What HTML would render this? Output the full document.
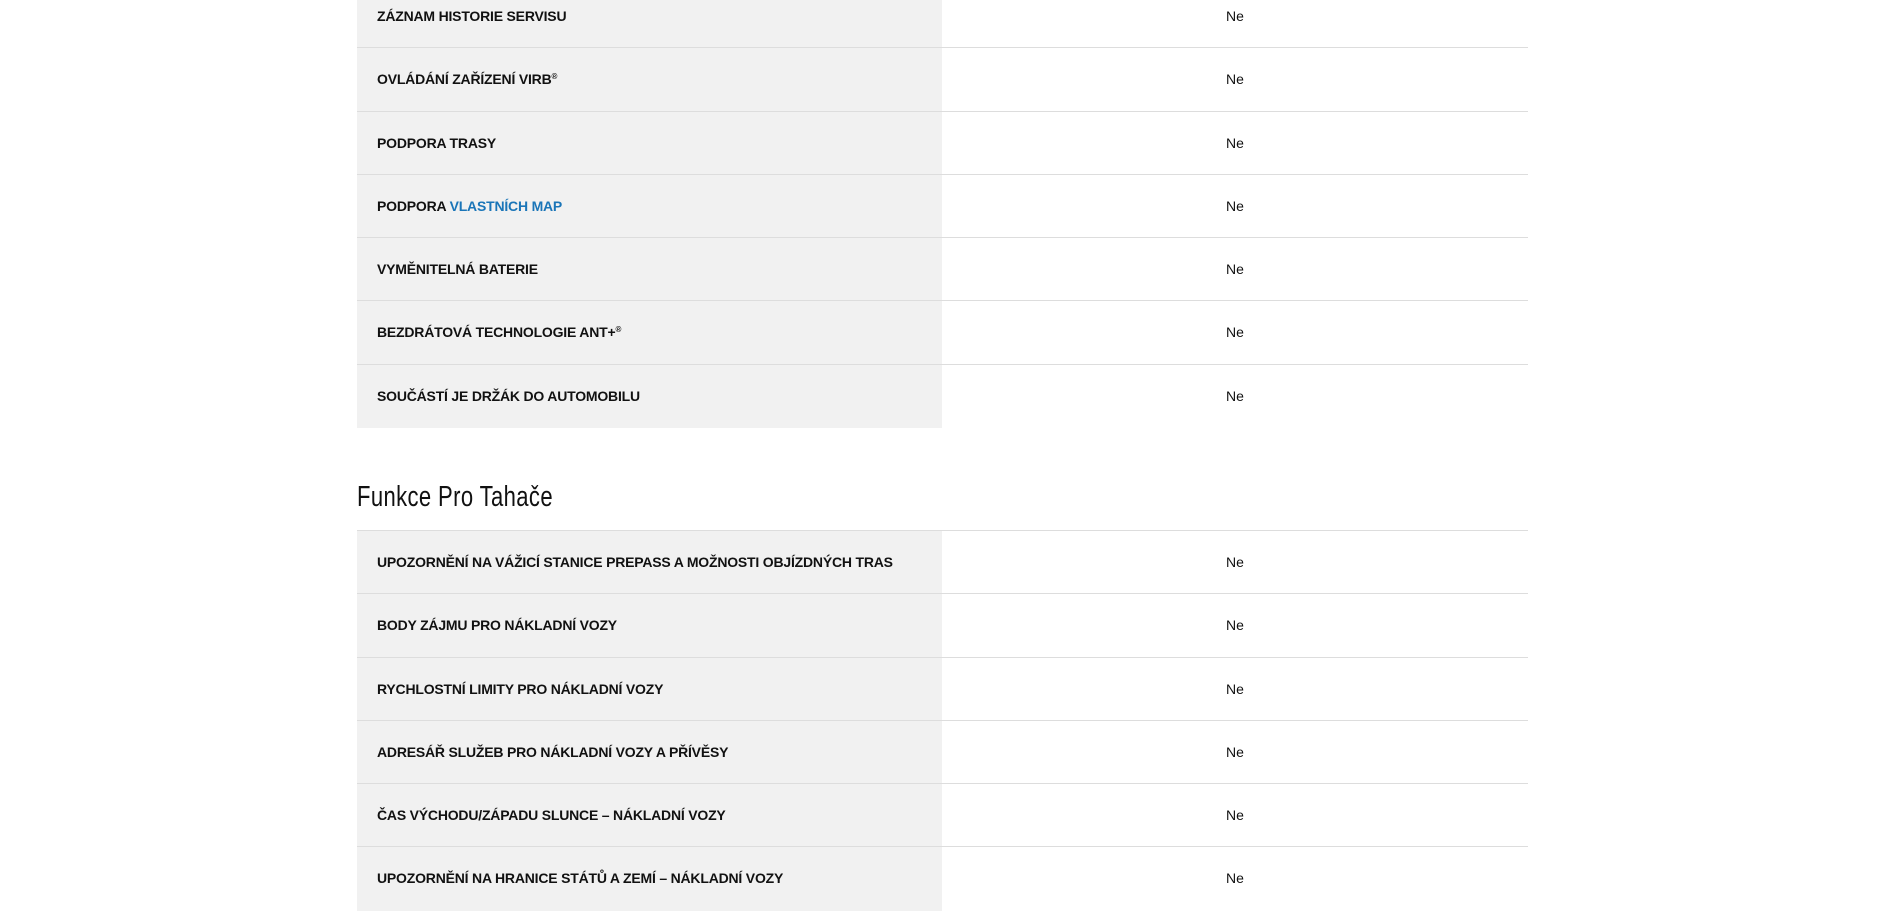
<!DOCTYPE html>
<html><head><meta charset="utf-8"><style>
body{margin:0;width:1887px;height:898px;background:#fff;position:relative;overflow:hidden;font-family:"Liberation Sans",Arial,sans-serif}
.t{position:absolute;left:357px;width:1171px}
.r{position:relative;height:63.3px;border-bottom:1px solid #ddd;box-sizing:border-box}
.r .l{position:absolute;left:0;top:0;bottom:0;width:585px;background:#f1f1f1}
.r .k{position:absolute;left:20px;top:0;line-height:62px;font-size:14px;font-weight:bold;color:#111;letter-spacing:-0.2px}
.r .v{position:absolute;left:869px;top:0;line-height:62px;font-size:14px;color:#111}
.r:last-child{border-bottom:none}
a{color:#1a75b8;text-decoration:none}
sup{font-size:8px;vertical-align:5px;line-height:0}
h2{position:absolute;left:357px;top:481px;margin:0;font-family:"Liberation Sans Narrow","Liberation Sans",sans-serif;font-weight:normal;font-size:29px;color:#111;transform:scaleX(0.76);transform-origin:left;letter-spacing:0.5px}
</style></head><body>
<div class="t" style="top:-15px">
<div class="r"><div class="l"></div><div class="k">ZÁZNAM HISTORIE SERVISU</div><div class="v">Ne</div></div>
<div class="r"><div class="l"></div><div class="k">OVLÁDÁNÍ ZAŘÍZENÍ VIRB<sup>®</sup></div><div class="v">Ne</div></div>
<div class="r"><div class="l"></div><div class="k">PODPORA TRASY</div><div class="v">Ne</div></div>
<div class="r"><div class="l"></div><div class="k">PODPORA <a>VLASTNÍCH MAP</a></div><div class="v">Ne</div></div>
<div class="r"><div class="l"></div><div class="k">VYMĚNITELNÁ BATERIE</div><div class="v">Ne</div></div>
<div class="r"><div class="l"></div><div class="k">BEZDRÁTOVÁ TECHNOLOGIE ANT+<sup>®</sup></div><div class="v">Ne</div></div>
<div class="r"><div class="l"></div><div class="k">SOUČÁSTÍ JE DRŽÁK DO AUTOMOBILU</div><div class="v">Ne</div></div>
</div>
<h2>Funkce Pro Tahače</h2>
<div class="t" style="top:530px;border-top:1px solid #ddd">
<div class="r"><div class="l"></div><div class="k">UPOZORNĚNÍ NA VÁŽICÍ STANICE PREPASS A MOŽNOSTI OBJÍZDNÝCH TRAS</div><div class="v">Ne</div></div>
<div class="r"><div class="l"></div><div class="k">BODY ZÁJMU PRO NÁKLADNÍ VOZY</div><div class="v">Ne</div></div>
<div class="r"><div class="l"></div><div class="k">RYCHLOSTNÍ LIMITY PRO NÁKLADNÍ VOZY</div><div class="v">Ne</div></div>
<div class="r"><div class="l"></div><div class="k">ADRESÁŘ SLUŽEB PRO NÁKLADNÍ VOZY A PŘÍVĚSY</div><div class="v">Ne</div></div>
<div class="r"><div class="l"></div><div class="k">ČAS VÝCHODU/ZÁPADU SLUNCE – NÁKLADNÍ VOZY</div><div class="v">Ne</div></div>
<div class="r"><div class="l"></div><div class="k">UPOZORNĚNÍ NA HRANICE STÁTŮ A ZEMÍ – NÁKLADNÍ VOZY</div><div class="v">Ne</div></div>
</div>
</body></html>
